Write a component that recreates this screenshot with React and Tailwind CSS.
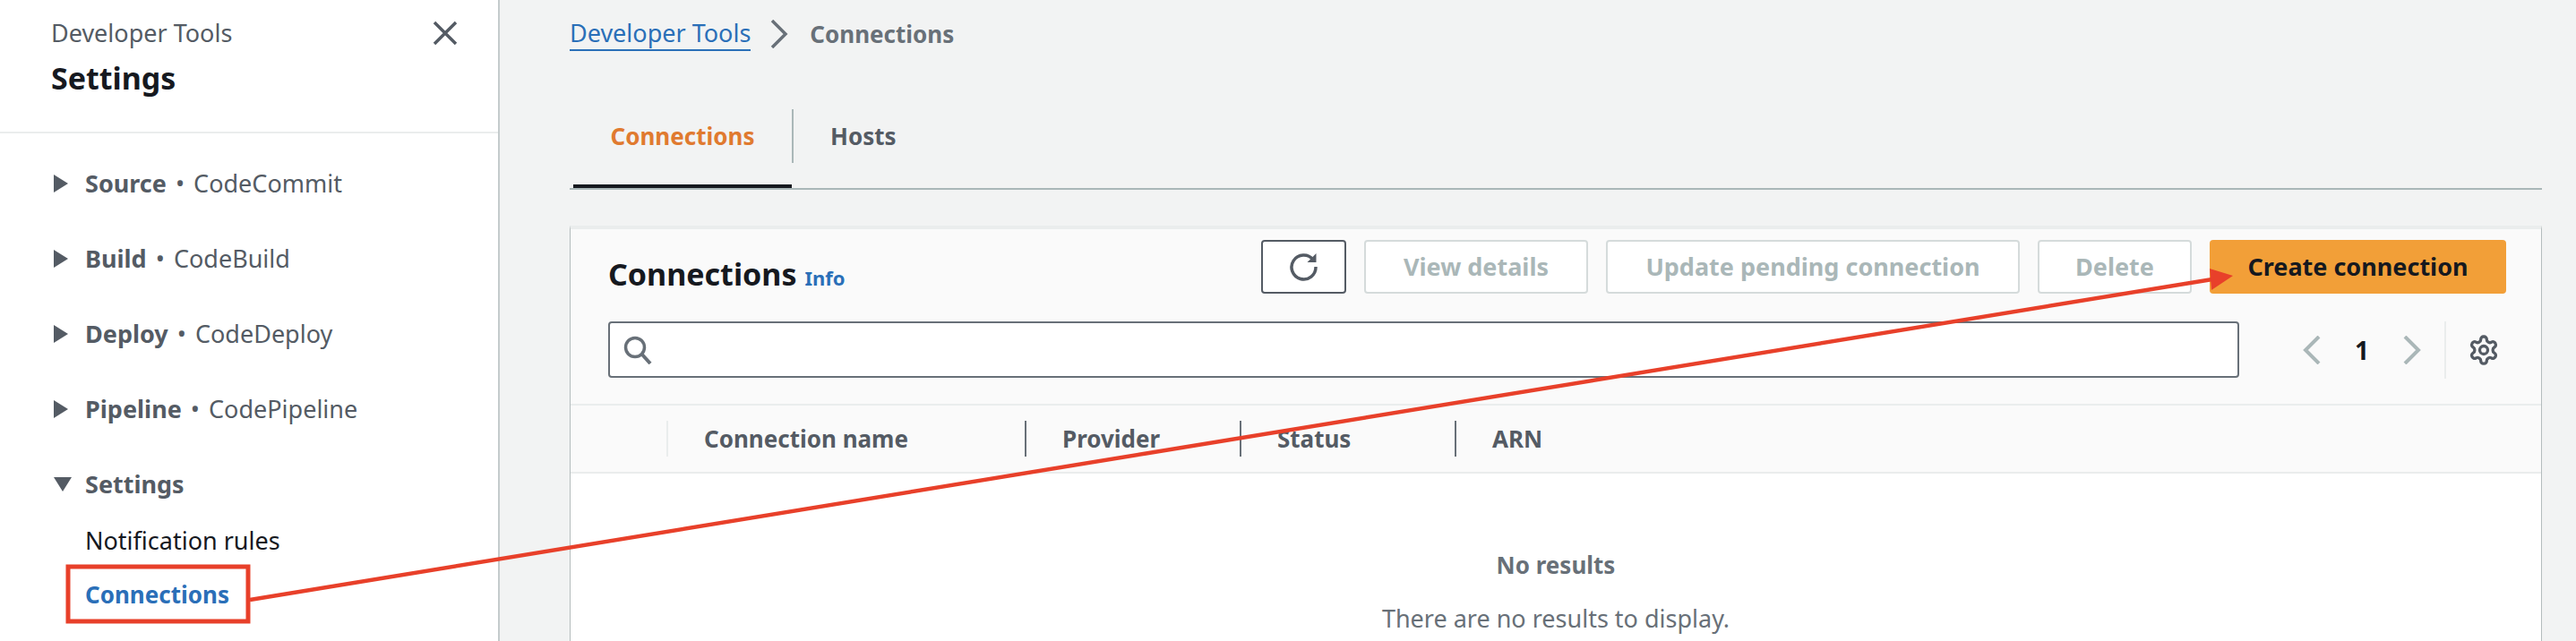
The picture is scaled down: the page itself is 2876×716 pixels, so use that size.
const font = "font-['Noto_Sans','Liberation_Sans',sans-serif]"

function Triangle({ open }) {
  return open ? (
    <svg width="20" height="16" viewBox="0 0 20 16" className="text-[#545b64]">
      <path d="M0 0H20L10 16Z" fill="currentColor" />
    </svg>
  ) : (
    <svg width="16" height="20" viewBox="0 0 16 20" className="text-[#545b64]">
      <path d="M0 0L16 10L0 20Z" fill="currentColor" />
    </svg>
  )
}

function NavRow({ title, service, open }) {
  return (
    <div className="flex h-[84px] items-center">
      <div className="flex w-[38px] justify-start pl-[3px]">
        <Triangle open={open} />
      </div>
      <div className="text-[27px] text-[#545b64]">
        <span className="font-bold">{title}</span>
        {service && <span className="mx-[3px]"> • </span>}
        {service}
      </div>
    </div>
  )
}

function Sidebar() {
  return (
    <aside className="w-[558px] shrink-0 border-r-2 border-[#c4cbcc] bg-white">
      <div className="h-[147px] pl-[57px] pr-[45px] pt-[17px]">
        <div className="flex h-[40px] items-center justify-between">
          <span className="text-[27px] text-[#545b64]">Developer Tools</span>
          <svg width="28" height="28" viewBox="0 0 28 28" className="text-[#545b64]">
            <path d="M2 2L26 26M26 2L2 26" stroke="currentColor" strokeWidth="3.5" fill="none" />
          </svg>
        </div>
        <div className="mt-[9px] text-[34px] font-bold leading-[42px] text-[#16191f]">Settings</div>
      </div>
      <div className="border-t-2 border-[#eaeded] pl-[57px] pt-[14px]">
        <NavRow title="Source" service="CodeCommit" />
        <NavRow title="Build" service="CodeBuild" />
        <NavRow title="Deploy" service="CodeDeploy" />
        <NavRow title="Pipeline" service="CodePipeline" />
        <NavRow title="Settings" open />
        <div className="-mt-[2px] flex flex-col gap-[14px] pl-[38px] text-[27px]">
          <div className="h-[46px] leading-[46px] text-[#16191f]">Notification rules</div>
          <div className="h-[46px] text-[26px] font-bold leading-[46px] text-[#2a6fb8]">Connections</div>
        </div>
      </div>
    </aside>
  )
}

function DisabledButton({ width, children }) {
  return (
    <button className={`h-[60px] rounded-[4px] border-2 border-[#d5dbdb] bg-white text-[27px] font-bold text-[#aab7b8] ${width}`}>
      {children}
    </button>
  )
}

function Toolbar() {
  return (
    <div className="flex h-[60px] items-center justify-between">
      <div className="mt-[16px] flex items-baseline gap-[9px]">
        <span className="text-[34px] font-bold text-[#16191f]">Connections</span>
        <span className="text-[22px] font-bold text-[#2a6fb8]">Info</span>
      </div>
      <div className="flex gap-[20px]">
        <button className="flex h-[60px] w-[95px] items-center justify-center rounded-[4px] border-2 border-[#545b64] bg-white">
          <svg width="34" height="34" viewBox="0 0 34 34" fill="none" className="text-[#545b64]">
            <path d="M27 9A13.5 13.5 0 1 0 30 17" stroke="currentColor" strokeWidth="3.5" />
            <path d="M30.5 2V12H20.5Z" fill="currentColor" />
          </svg>
        </button>
        <DisabledButton width="w-[250px]">View details</DisabledButton>
        <DisabledButton width="w-[462px]">Update pending connection</DisabledButton>
        <DisabledButton width="w-[172px]">Delete</DisabledButton>
        <button className="h-[60px] w-[331px] rounded-[4px] bg-[#f29f38] text-[27px] font-bold text-[#16191f]">
          Create connection
        </button>
      </div>
    </div>
  )
}

function SearchRow() {
  return (
    <div className="mt-[31px] flex items-start">
      <div className="flex h-[63px] w-[1821px] items-center rounded-[4px] border-2 border-[#687078] bg-white pl-[15px]">
        <svg width="32" height="32" viewBox="0 0 32 32" fill="none" className="text-[#687078]">
          <circle cx="13" cy="13" r="10.5" stroke="currentColor" strokeWidth="3.5" />
          <path d="M20.5 20.5L30 31" stroke="currentColor" strokeWidth="4" />
        </svg>
      </div>
      <div className="ml-[71px] flex h-[63px] items-center">
        <svg width="20" height="32" viewBox="0 0 20 32" fill="none" className="text-[#aab7b8]">
          <path d="M18 1L3 16L18 31" stroke="currentColor" strokeWidth="4" />
        </svg>
        <span className="w-[92px] text-center text-[28px] font-bold text-[#16191f]">1</span>
        <svg width="20" height="32" viewBox="0 0 20 32" fill="none" className="text-[#aab7b8]">
          <path d="M2 1L17 16L2 31" stroke="currentColor" strokeWidth="4" />
        </svg>
        <div className="ml-[26px] h-[64px] w-[2px] bg-[#eaeded]" />
        <svg width="36" height="36" viewBox="0 0 24 24" fill="none" stroke="currentColor" strokeWidth="2.2" className="ml-[24px] text-[#545b64]">
          <path d="M12.2 2h-.4a2 2 0 0 0-2 2v.2a2 2 0 0 1-1 1.7l-.4.3a2 2 0 0 1-2 0l-.2-.1a2 2 0 0 0-2.7.7l-.2.4a2 2 0 0 0 .7 2.7l.2.1a2 2 0 0 1 1 1.7v.6a2 2 0 0 1-1 1.8l-.2.1a2 2 0 0 0-.7 2.7l.2.4a2 2 0 0 0 2.7.7l.2-.1a2 2 0 0 1 2 0l.4.3a2 2 0 0 1 1 1.7v.2a2 2 0 0 0 2 2h.4a2 2 0 0 0 2-2v-.2a2 2 0 0 1 1-1.7l.4-.3a2 2 0 0 1 2 0l.2.1a2 2 0 0 0 2.7-.7l.2-.4a2 2 0 0 0-.7-2.7l-.2-.1a2 2 0 0 1-1-1.8v-.6a2 2 0 0 1 1-1.7l.2-.1a2 2 0 0 0 .7-2.7l-.2-.4a2 2 0 0 0-2.7-.7l-.2.1a2 2 0 0 1-2 0l-.4-.3a2 2 0 0 1-1-1.7V4a2 2 0 0 0-2-2Z" />
          <circle cx="12" cy="12" r="3" />
        </svg>
      </div>
    </div>
  )
}

function HeaderCell({ width, light, children }) {
  return (
    <div className={`flex h-[40px] items-center border-l-2 pl-[40px] text-[26px] font-bold text-[#545b64] ${width} ${light ? 'border-[#eaeded]' : 'border-[#687078]'}`}>
      {children}
    </div>
  )
}

function ConnectionsPanel() {
  return (
    <section className="mt-[40px] flex flex-1 flex-col border-x-[1.5px] border-t-4 border-x-[#b4bcbd] border-t-[#eaeded] bg-[#fafafa]">
      <div className="h-[195px] pl-[42px] pr-[39px] pt-[12px]">
        <Toolbar />
        <SearchRow />
      </div>
      <div className="flex h-[78px] items-center border-y-2 border-[#eaeded] pl-[107px]">
        <HeaderCell width="w-[400px]" light>Connection name</HeaderCell>
        <HeaderCell width="w-[240px]">Provider</HeaderCell>
        <HeaderCell width="w-[240px]">Status</HeaderCell>
        <HeaderCell width="w-[240px]">ARN</HeaderCell>
      </div>
      <div className="flex flex-1 flex-col items-center bg-white pt-[82px] text-[27px] text-[#687078]">
        <div className="h-[40px] text-[26px] font-bold leading-[40px]">No results</div>
        <div className="mt-[20px] h-[40px] leading-[40px]">There are no results to display.</div>
      </div>
    </section>
  )
}

export default function App() {
  return (
    <div className={`relative flex h-[716px] w-[2876px] overflow-hidden bg-[#f2f3f3] ${font}`}>
      <Sidebar />
      <main className="flex min-w-0 flex-1 flex-col pl-[78px] pr-[38px]">
        <nav className="flex h-[76px] items-center text-[27px]">
          <span className="border-b-2 border-[#2a6fb8] leading-[36px] text-[#2a6fb8]">Developer Tools</span>
          <svg width="20" height="32" viewBox="0 0 20 32" fill="none" className="ml-[22px] mr-[24px] text-[#687078]">
            <path d="M2 1L17 16L2 31" stroke="currentColor" strokeWidth="3.5" />
          </svg>
          <span className="text-[26px] font-bold text-[#687078]">Connections</span>
        </nav>
        <div className="flex h-[136px] items-start border-b-2 border-[#aab7b8] pl-[4px] pt-[46px] text-[26px] font-bold">
          <div className="w-[244px] border-b-4 border-[#16191f] pb-[24px]">
            <div className="flex h-[60px] items-center justify-center text-[#e07a2f]">Connections</div>
          </div>
          <div className="flex h-[60px] items-center border-l-2 border-[#aab7b8] pl-[41px] text-[#545b64]">Hosts</div>
        </div>
        <ConnectionsPanel />
      </main>
      {/* red annotation drawn over the page */}
      <svg className="pointer-events-none absolute left-0 top-0" width="2876" height="716" fill="none">
        <rect x="76" y="633" width="201" height="61" stroke="#e8402a" strokeWidth="5" />
        <path d="M279 670L2470 312" stroke="#e8402a" strokeWidth="4.5" />
        <path d="M2493 308L2467 300L2469 324Z" fill="#e8402a" />
      </svg>
    </div>
  )
}
